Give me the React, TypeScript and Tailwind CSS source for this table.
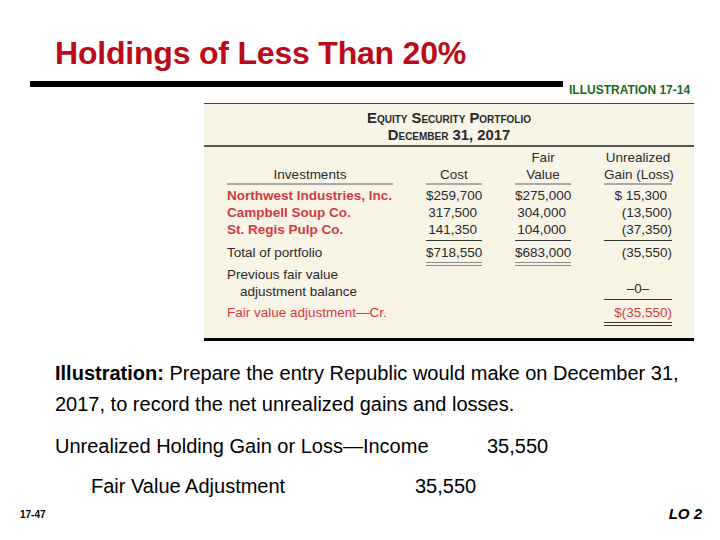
import React from "react";

type Row = {
  name: string;
  cost: string;
  fair: string;
  gain: string;
};

const ROWS: Row[] = [
  { name: "Northwest Industries, Inc.", cost: "$259,700", fair: "$275,000", gain: "$ 15,300" },
  { name: "Campbell Soup Co.", cost: "317,500", fair: "304,000", gain: "(13,500)" },
  { name: "St. Regis Pulp Co.", cost: "141,350", fair: "104,000", gain: "(37,350)" },
];

const font = { fontFamily: "'Liberation Sans', Arial, sans-serif" };

// right aligned number, positive values leave room for the hanging paren
const Num = ({ v, className = "" }: { v: string; className?: string }) => {
  const paren = v.endsWith(")");
  return <div className={`text-right whitespace-nowrap ${paren ? "" : "pr-[5px]"} ${className}`}>{v}</div>;
};

const Portfolio = () => (
  <div className="ml-[204px] w-[490px] border-t border-[#444] bg-[#f8f5e7] text-[13.5px] leading-[17px] text-[#2a2a2a]">
    {/* heading */}
    <div className="pt-[6px] pb-[1px] text-center font-bold text-[14.8px] leading-[17px] [font-variant-caps:small-caps]">
      <div>Equity Security Portfolio</div>
      <div>December 31, 2017</div>
    </div>
    <div className="h-[2px] bg-[#555]" />

    <div className="pl-[23px] pt-[2px] grid grid-cols-[166px_56px_56px_68px] gap-x-[33px]">
      {/* column headers */}
      <div className="self-end text-center border-b-2 border-[#aaa]">Investments</div>
      <div className="self-end text-center border-b-2 border-[#aaa]">Cost</div>
      <div className="self-end text-center border-b-2 border-[#aaa]">
        Fair
        <br />
        Value
      </div>
      <div className="self-end text-center border-b-2 border-[#aaa] whitespace-nowrap">
        Unrealized
        <br />
        Gain (Loss)
      </div>

      <div className="col-span-4 h-[2px]" />

      {ROWS.map((r, i) => {
        const line = i === ROWS.length - 1 ? "border-b border-[#333] pb-[2px]" : "";
        return (
          <React.Fragment key={r.name}>
            <div className="font-bold text-[#d13a3e] whitespace-nowrap">{r.name}</div>
            <Num v={r.cost} className={line} />
            <Num v={r.fair} className={line} />
            <Num v={r.gain} className={line} />
          </React.Fragment>
        );
      })}

      <div className="col-span-4 h-[3px]" />

      <div>Total of portfolio</div>
      <Num v="$718,550" className="border-b-[4px] border-double border-[#888] pb-[1px]" />
      <Num v="$683,000" className="border-b-[4px] border-double border-[#888] pb-[1px]" />
      <Num v="(35,550)" />

      <div>
        Previous fair value
        <div className="pl-[13px]">adjustment balance</div>
      </div>
      <div />
      <div />
      <div className="self-end text-center border-b border-[#333] pb-[2px]">–0–</div>

      <div className="col-span-4 h-[4px]" />

      <div className="text-[#d13a3e] whitespace-nowrap">Fair value adjustment—Cr.</div>
      <div />
      <div />
      <Num v="$(35,550)" className="text-[#d13a3e] border-b-[4px] border-double border-[#333] pb-[1px]" />
    </div>

    <div className="h-[12px]" />
    <div className="h-[3px] bg-black" />
  </div>
);

export default function App() {
  return (
    <div className="w-[720px] h-[540px] bg-white overflow-hidden flex flex-col" style={font}>
      <h1 className="ml-[55px] mt-[34px] text-[32px] leading-[38px] font-bold tracking-[-0.2px] text-[#bb0a18]">
        Holdings of Less Than 20%
      </h1>

      <div className="mt-[9px] flex items-start">
        <div className="ml-[30px] w-[533px] h-[6px] bg-black" />
        <div className="ml-[6px] mt-[2px] text-[12px] leading-[14px] font-bold text-[#196a1c]">
          ILLUSTRATION 17-14
        </div>
      </div>

      <div className="mt-[6px]">
        <Portfolio />
      </div>

      <div className="ml-[55px] mt-[17px] text-[20px] leading-[31px] text-black whitespace-nowrap">
        <b>Illustration:</b> Prepare the entry Republic would make on December 31,
        <br />
        2017, to record the net unrealized gains and losses.
      </div>

      <div className="mt-[6px] text-[20px] leading-[40px] text-black whitespace-nowrap">
        <div className="flex">
          <div className="ml-[55px] w-[432px]">Unrealized Holding Gain or Loss—Income</div>
          <div>35,550</div>
        </div>
        <div className="flex">
          <div className="ml-[91px] w-[324px]">Fair Value Adjustment</div>
          <div>35,550</div>
        </div>
      </div>

      <div className="h-[16px] flex items-center justify-between pl-[20px] pr-[18px]">
        <div className="text-[10px] font-bold">17-47</div>
        <div className="text-[15px] font-bold italic">LO 2</div>
      </div>
    </div>
  );
}
